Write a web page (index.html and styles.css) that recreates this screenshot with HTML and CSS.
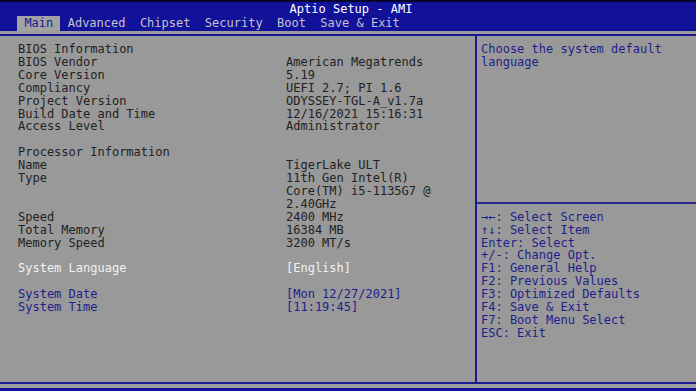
FILE: index.html
```html
<!DOCTYPE html>
<html>
<head>
<meta charset="utf-8">
<link rel="stylesheet" href="styles.css">
</head>
<body>
<div class="screen">
  <header class="top">
    <div class="title">Aptio Setup - AMI</div>
    <nav class="tabs">
      <span class="tab active">Main</span>
      <span class="tab">Advanced</span>
      <span class="tab">Chipset</span>
      <span class="tab">Security</span>
      <span class="tab">Boot</span>
      <span class="tab">Save &amp; Exit</span>
    </nav>
  </header>
  <div class="band"></div>
  <main class="body">
    <section class="left">
      <div class="row"><span class="k">BIOS Information</span><span class="v"></span></div>
      <div class="row"><span class="k">BIOS Vendor</span><span class="v">American Megatrends</span></div>
      <div class="row"><span class="k">Core Version</span><span class="v">5.19</span></div>
      <div class="row"><span class="k">Compliancy</span><span class="v">UEFI 2.7; PI 1.6</span></div>
      <div class="row"><span class="k">Project Version</span><span class="v">ODYSSEY-TGL-A_v1.7a</span></div>
      <div class="row"><span class="k">Build Date and Time</span><span class="v">12/16/2021 15:16:31</span></div>
      <div class="row"><span class="k">Access Level</span><span class="v">Administrator</span></div>
      <div class="row blank"></div>
      <div class="row"><span class="k">Processor Information</span><span class="v"></span></div>
      <div class="row"><span class="k">Name</span><span class="v">TigerLake ULT</span></div>
      <div class="row"><span class="k">Type</span><span class="v">11th Gen Intel(R)<br>Core(TM) i5-1135G7 @<br>2.40GHz</span></div>
      <div class="row"><span class="k">Speed</span><span class="v">2400 MHz</span></div>
      <div class="row"><span class="k">Total Memory</span><span class="v">16384 MB</span></div>
      <div class="row"><span class="k">Memory Speed</span><span class="v">3200 MT/s</span></div>
      <div class="row blank"></div>
      <div class="row sel"><span class="k">System Language</span><span class="v">[English]</span></div>
      <div class="row blank"></div>
      <div class="row opt"><span class="k">System Date</span><span class="v">[Mon 12/27/2021]</span></div>
      <div class="row opt"><span class="k">System Time</span><span class="v">[11:19:45]</span></div>
    </section>
    <aside class="right">
      <div class="help">Choose the system default<br>language</div>
      <div class="sep"></div>
      <div class="keys">
        <div>&#x2192;&#x2190;: Select Screen</div>
        <div>&#x2191;&#x2193;: Select Item</div>
        <div>Enter: Select</div>
        <div>+/-: Change Opt.</div>
        <div>F1: General Help</div>
        <div>F2: Previous Values</div>
        <div>F3: Optimized Defaults</div>
        <div>F4: Save &amp; Exit</div>
        <div>F7: Boot Menu Select</div>
        <div>ESC: Exit</div>
      </div>
    </aside>
  </main>
  <footer class="foot"></footer>
</div>
</body>
</html>
```

FILE: styles.css
```css
* { box-sizing: border-box; }
html, body { margin: 0; padding: 0; }
body {
  background: #999999;
  font-family: "DejaVu Sans Mono", "Liberation Mono", monospace;
  font-size: 12px;
  line-height: 12.9px;
  color: #222222;
  width: 696px;
  height: 391px;
  overflow: hidden;
}
.screen {
  display: flex;
  flex-direction: column;
  height: 391px;
}
.top {
  background: #11119a;
  border-top: 2px solid #05052a;
  height: 31px;
  display: flex;
  flex-direction: column;
}
.title {
  height: 14px;
  line-height: 15px;
  text-align: center;
  color: #ffffff;
  padding-left: 6px;
}
.tabs {
  display: flex;
  padding-left: 17px;
  height: 15px;
}
.tab {
  padding: 0 7px 0 7.4px;
  line-height: 15px;
  color: #c4c4cc;
}
.tab.active {
  background: #a2a2a2;
  color: #1a1a90;
}
.band {
  height: 5px;
  background: #9c9c9c;
  border-bottom: 2px solid #1a1a8e;
}
.body {
  flex: 1;
  display: flex;
  min-height: 0;
}
.left {
  width: 477px;
  border-right: 2px solid #1a1a8e;
  padding: 7px 0 0 18px;
}
.row {
  display: flex;
  min-height: 12.9px;
}
.k { width: 268px; }
.v { flex: 1; }
.sel { color: #f2f2f2; }
.opt { color: #1e1e8c; }
.right {
  flex: 1;
  padding-top: 7px;
  color: #1e1e8c;
  display: flex;
  flex-direction: column;
}
.help {
  padding-left: 4px;
  height: 154.8px;
}
.sep {
  height: 12.9px;
  position: relative;
}
.sep::after {
  content: "";
  position: absolute;
  left: 0;
  right: 0;
  top: 4px;
  border-top: 2px solid #2a2a90;
}
.keys { padding-left: 4px; }
.foot {
  height: 9px;
  border-top: 2px solid #1a1a8e;
  border-bottom: 3px solid #11119a;
  background: #9c9c9c;
}
```
